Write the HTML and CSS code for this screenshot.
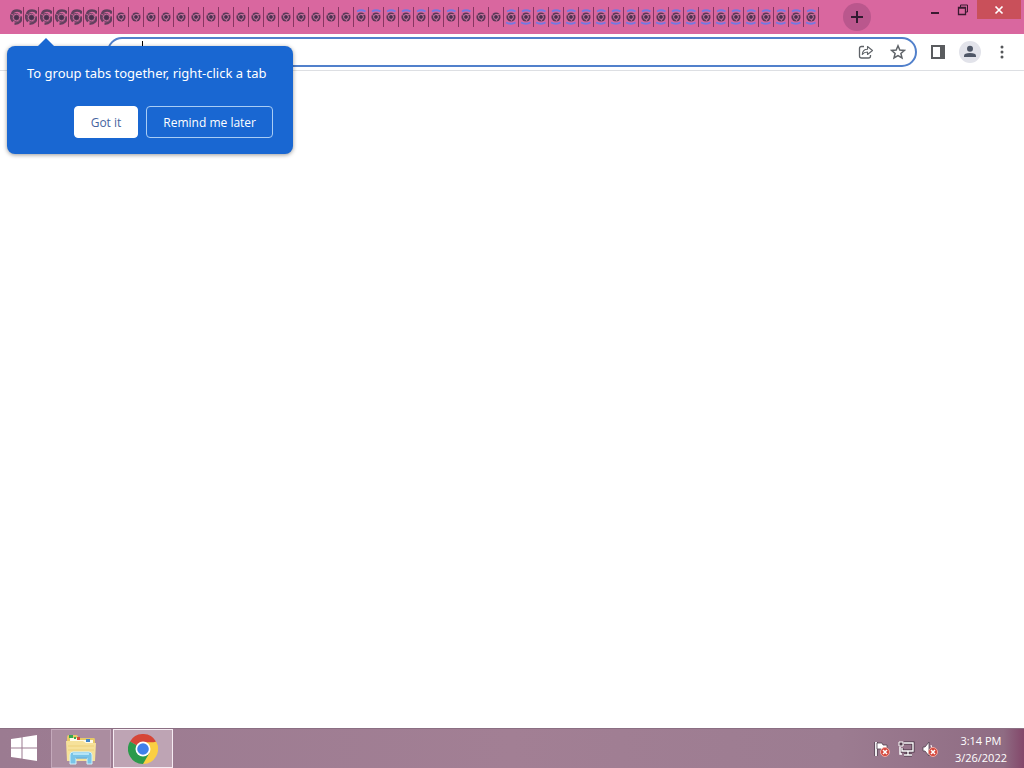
FILE: index.html
```
<!DOCTYPE html>
<html lang="en">
<head>
    <meta charset="UTF-8">
    <meta name="viewport" content="width=device-width, initial-scale=1.0">
    <title>New Tab</title>
    <link rel="stylesheet" href="styles.css">
</head>
<body>
    <svg class="defs" aria-hidden="true">
        <symbol id="tab-large" viewBox="0 0 12 16">
            <path d="M2 5Q3 1.5 7 1.5Q11 1.5 12 4.5" fill="none" stroke="#62405e" stroke-width="2.6"/>
            <path d="M1.2 5.5Q0 9 3 12.5" fill="none" stroke="#62405e" stroke-width="2.2"/>
            <path d="M11 7.5Q12 14.5 4.5 14.8" fill="none" stroke="#62405e" stroke-width="2.4"/>
            <circle cx="6" cy="8.5" r="4.4" fill="#6f4668"/>
            <circle cx="6.5" cy="8.5" r="3.3" fill="none" stroke="#c46a98" stroke-width="1"/>
            <circle cx="6.5" cy="8.5" r="2.3" fill="#4c304f"/>
        </symbol>
        <symbol id="tab-small" viewBox="0 0 12 16">
            <circle cx="6" cy="8" r="4.6" fill="#5a3857"/>
            <path d="M6 5.5H10.5M3.6 7L2 5M7.5 9.5L6 12.4" fill="none" stroke="#b8608f" stroke-width="1"/>
            <circle cx="6" cy="8" r="2.4" fill="none" stroke="#cf76a5" stroke-width="1"/>
            <circle cx="6" cy="8" r="1.4" fill="#4c304f"/>
        </symbol>
        <symbol id="spin-top" viewBox="0 0 12 16">
            <path d="M2 2.5Q6 0 10.5 2.5" fill="none" stroke="#7379e2" stroke-width="1.8"/>
        </symbol>
        <symbol id="spin-bottom" viewBox="0 0 12 16">
            <path d="M1 13.5Q6 16 10.5 13.5" fill="none" stroke="#7379e2" stroke-width="1.8"/>
        </symbol>
        <symbol id="badge" viewBox="0 0 10 10">
            <circle cx="5" cy="5" r="4.5" fill="#d4473c" stroke="#f0aaa4"/>
            <path d="M3 3L7 7M7 3L3 7" stroke="#fff" stroke-width="1.5"/>
        </symbol>
    </svg>

    <header class="titlebar">
        <div class="tabs" id="tabs"></div>
        <button class="new-tab" aria-label="New tab">
            <svg width="14" height="14" viewBox="0 0 14 14"><path d="M7 1V13M1 7H13" stroke="#321a30" stroke-width="2"/></svg>
        </button>
        <div class="window-buttons">
            <button class="window-button" aria-label="Minimize">
                <svg width="12" height="12" viewBox="0 0 12 12"><path d="M2 9H10" stroke="#3a1a30" stroke-width="2"/></svg>
            </button>
            <button class="window-button" aria-label="Restore">
                <svg width="12" height="12" viewBox="0 0 12 12"><path d="M3.5 3V1H10.5V8H9" fill="none" stroke="#3a1a30"/><path d="M1.5 3.5H8.5V10.5H1.5ZM1 4H9" fill="none" stroke="#3a1a30" stroke-width="1.3"/></svg>
            </button>
            <button class="window-button close" aria-label="Close">
                <svg width="10" height="10" viewBox="0 0 10 10"><path d="M1.5 1.5L8.5 8.5M8.5 1.5L1.5 8.5" stroke="#fff" stroke-width="1.7"/></svg>
            </button>
        </div>
    </header>

    <div class="toolbar">
        <div class="omnibox">
            <span class="caret"></span>
            <input type="text" class="address" aria-label="Address">
            <button class="tool" aria-label="Share">
                <svg width="16" height="16" viewBox="0 0 16 16" fill="none" stroke="#5f6368" stroke-width="1.3" stroke-linejoin="round"><path d="M6 2.5H3.5Q1.5 2.5 1.5 4.5V12Q1.5 14 3.5 14H10.5Q12.5 14 12.5 12V11"/><path d="M4.3 10.5C4.5 7 6.5 5.2 9.5 5.2V2.5L14.5 6.5L9.5 10.5V8C7.5 8 5.5 8.8 4.3 10.5Z" stroke-width="1.1"/></svg>
            </button>
            <button class="tool" aria-label="Bookmark this tab">
                <svg width="16" height="16" viewBox="0 0 16 16"><path d="M8 1.8L9.8 6L14.4 6.4L10.9 9.4L12 13.9L8 11.5L4 13.9L5.1 9.4L1.6 6.4L6.2 6Z" fill="none" stroke="#5f6368" stroke-width="1.5"/></svg>
            </button>
        </div>
        <button class="tool" aria-label="Side panel">
            <svg width="14" height="14" viewBox="0 0 14 14"><path d="M0 0H14V14H0ZM2 2V12H9V2Z" fill="#5a5c5f" fill-rule="evenodd"/></svg>
        </button>
        <button class="tool" aria-label="Profile">
            <svg width="22" height="22" viewBox="0 0 22 22"><circle cx="11" cy="11" r="11" fill="#e2e3ea"/><circle cx="11" cy="7.7" r="3" fill="#4f5767"/><path d="M5 16V14.8Q5 12 11 12T17 14.8V16Z" fill="#4f5767"/></svg>
        </button>
        <button class="tool" aria-label="Menu">
            <svg width="4" height="14" viewBox="0 0 4 14" fill="#55575a"><circle cx="2" cy="2" r="1.5"/><circle cx="2" cy="7" r="1.5"/><circle cx="2" cy="12" r="1.5"/></svg>
        </button>
    </div>

    <main class="page"></main>

    <div class="bubble" role="dialog" aria-labelledby="bubble-text">
        <p id="bubble-text">To group tabs together, right-click a tab</p>
        <div class="bubble-buttons">
            <button class="got-it">Got it</button>
            <button class="remind">Remind me later</button>
        </div>
    </div>

    <footer class="taskbar">
        <button class="start" aria-label="Start">
            <svg width="28" height="28" viewBox="0 0 28 28" fill="#fff"><path d="M1 4L11.5 2.4V12.4H1ZM12.5 2.2L27 0V12.4H12.5ZM1 13.4H11.5V23.5L1 22ZM12.5 13.4H27V26L12.5 23.7Z"/></svg>
        </button>
        <button class="task" aria-label="File Explorer">
            <svg width="34" height="32" viewBox="0 0 34 32">
                <path d="M3 4Q3 2 5 2H13L15 5H30Q31 5 31 7V27H3Z" fill="#e6c968"/>
                <path d="M6 5H13L15 7H29V10H6Z" fill="#fffbe8"/>
                <path d="M5 2H9V5H5ZM10 4H12V6H10Z" fill="#35a853"/><path d="M13 4H16V7H13Z" fill="#d84d38"/><path d="M22 6H26V9H22Z" fill="#4386c9"/>
                <path d="M2 8H19L22 10H32L31 28H3Z" fill="#f6e19a"/>
                <path d="M4 13H30M4 17H30" stroke="#edd07a"/>
                <path d="M6 31V22Q6 19 9 19H25Q28 19 28 22V31H23V25H12V31Z" fill="#79c4e8" stroke="#d1effa"/>
                <path d="M9 21H25" stroke="#b5e4f6" stroke-width="2"/>
                <path d="M12 25H23" stroke="#3f94cc"/>
            </svg>
        </button>
        <button class="task active" aria-label="Google Chrome">
            <svg width="30" height="30" viewBox="0 0 48 48">
                <path d="M24 24L3.2 12A24 24 0 0 1 44.8 12Z" fill="#d64637"/>
                <path d="M24 24L44.8 12A24 24 0 0 1 24 48Z" fill="#fbcf43"/>
                <path d="M24 24V48A24 24 0 0 1 3.2 12Z" fill="#2b9a4b"/>
                <path d="M34.4 30L24 48L20 34Z" fill="#2b9a4b"/>
                <path d="M24 13H45A24 24 0 0 1 48 24L34 30Z" fill="#fbcf43"/>
                <circle cx="24" cy="24" r="12" fill="#fff"/><circle cx="24" cy="24" r="9.3" fill="#3f80ea"/>
            </svg>
        </button>
        <div class="tray">
            <button class="tray-icon" aria-label="Action Center">
                <svg width="18" height="18" viewBox="0 0 18 18"><path d="M3 2V16" stroke="#51404f" stroke-width="3.4"/><path d="M3 2V16" stroke="#fff" stroke-width="1.8"/><path d="M4 3H9L10 5H14V10H9L8 9H4Z" fill="#fff" stroke="#51404f" stroke-width=".8"/><use href="#badge" x="7" y="7" width="10" height="10"/></svg>
            </button>
            <button class="tray-icon" aria-label="Network">
                <svg width="18" height="18" viewBox="0 0 18 18"><path d="M7 3H16V11H5V8M11 11V15M7 15H15" fill="none" stroke="#453342" stroke-width="3"/><path d="M7 3H16V11H5V8M11 11V15M7 15H15M3 7V14H5" fill="none" stroke="#fff" stroke-width="1.4"/><path d="M2 2H6V6H2Z" fill="#54404f" stroke="#fff"/></svg>
            </button>
            <button class="tray-icon" aria-label="Volume muted">
                <svg width="18" height="18" viewBox="0 0 18 18"><path d="M2 7H4L8 2V16L4 11H2Z" fill="#fff" stroke="#51404f" stroke-width=".8"/><path d="M10 5Q12 9 10 13" fill="none" stroke="#fff"/><use href="#badge" x="7" y="7" width="10" height="10"/></svg>
            </button>
            <div class="clock">
                <div>3:14 PM</div>
                <div>3/26/2022</div>
            </div>
        </div>
    </footer>

    <script>
        const tabs = document.getElementById('tabs');
        const tabCount = 54;
        const largeTabs = 7;

        for (let i = 0; i < tabCount; i++) {
            const tab = document.createElement('button');
            let icon = `<use href="#${i < largeTabs ? 'tab-large' : 'tab-small'}"/>`;

            // tabs further right are still loading
            if (i >= 23 && i !== 31 && i !== 32) {
                icon += '<use href="#spin-top"/>';
            }
            if (i > 32) {
                icon += '<use href="#spin-bottom"/>';
            }

            tab.className = 'tab';
            tab.setAttribute('aria-label', `Tab ${i + 1}`);
            tab.innerHTML = `<svg width="12" height="16">${icon}</svg>`;
            tabs.appendChild(tab);
        }
    </script>
</body>
</html>
```
FILE: styles.css
```
body {
    font-family: "Open Sans", "Noto Sans", sans-serif;
    font-size: 12px;
    margin: 0;
    min-height: 100vh;
    display: flex;
    flex-direction: column;
    background-color: #fff;
}
button {
    border: none;
    padding: 0;
    background: none;
    font: inherit;
    display: flex;
    align-items: center;
    justify-content: center;
    cursor: pointer;
}
.defs {
    position: absolute;
    width: 0;
    height: 0;
}
.titlebar {
    display: flex;
    align-items: center;
    height: 34px;
    padding-left: 9px;
    background-color: #d9679f;
}
.tabs {
    display: flex;
}
.tab {
    width: 15px;
    height: 20px;
    border-right: 1px solid #873762;
}
.new-tab {
    width: 28px;
    height: 28px;
    margin-left: 24px;
    border-radius: 50%;
    background-color: #ba578d;
}
.window-buttons {
    display: flex;
    align-self: flex-start;
    margin-left: auto;
    padding-right: 3px;
}
.window-button {
    width: 28px;
    height: 19px;
}
.close {
    width: 44px;
    background-color: #c9505a;
}
.toolbar {
    display: flex;
    align-items: center;
    height: 36px;
    padding: 0 6px 0 107px;
    border-bottom: 1px solid #dddfe3;
}
.omnibox {
    display: flex;
    align-items: center;
    flex: 1;
    box-sizing: border-box;
    height: 30px;
    margin-right: 5px;
    padding: 0 1px 0 33px;
    border: 2px solid #5180cb;
    border-radius: 15px;
}
.caret {
    width: 1px;
    height: 22px;
    background-color: #000;
}
.address {
    flex: 1;
    min-width: 0;
    border: none;
    outline: none;
    font: inherit;
    background: none;
}
.tool {
    width: 32px;
    height: 26px;
}
.page {
    flex: 1;
}
/* Promo bubble floats over the toolbar */
.bubble {
    position: absolute;
    top: 46px;
    left: 7px;
    box-sizing: border-box;
    width: 286px;
    padding: 18px 20px 16px;
    border-radius: 8px;
    background-color: #1967d2;
    color: #fff;
    box-shadow: 0 1px 4px rgba(0, 0, 0, 0.4);
}
.bubble::before {
    content: "";
    position: absolute;
    top: -8px;
    left: 31px;
    border: 8px solid transparent;
    border-top: none;
    border-bottom-color: #1967d2;
}
.bubble p {
    margin: 0 0 24px;
    font-family: "Noto Sans", "Open Sans", sans-serif;
    font-size: 13px;
    line-height: 18px;
    white-space: nowrap;
}
.bubble-buttons {
    display: flex;
    justify-content: flex-end;
    gap: 8px;
}
.bubble-buttons button {
    height: 32px;
    padding: 0 16px;
    border: 1px solid #fff;
    border-radius: 4px;
    white-space: nowrap;
}
.bubble-buttons .got-it {
    background-color: #fff;
    color: #46659f;
}
.bubble-buttons .remind {
    border-color: #a9cdf5;
    color: #fff;
}
.taskbar {
    display: flex;
    box-sizing: border-box;
    height: 40px;
    border-top: 1px solid #8b6f83;
    background: linear-gradient(to right, #9b7b91, #a27f94 50%, #9c7c91 82%, #8f6c83 98%, #83476a);
}
.start {
    width: 48px;
    margin-right: 3px;
}
.task {
    box-sizing: border-box;
    width: 60px;
    margin-right: 2px;
    border: 1px solid #c4a9bb;
    background-color: #ab8da0;
}
.active {
    border-color: #f5ebf2;
    background-color: #bea4b4;
}
.tray {
    display: flex;
    align-items: center;
    gap: 6px;
    margin-left: auto;
    padding-right: 17px;
}
.tray-icon {
    width: 18px;
    height: 18px;
}
.clock {
    margin-left: 10px;
    color: #fff;
    font-size: 11px;
    line-height: 17px;
    text-align: center;
}
```
